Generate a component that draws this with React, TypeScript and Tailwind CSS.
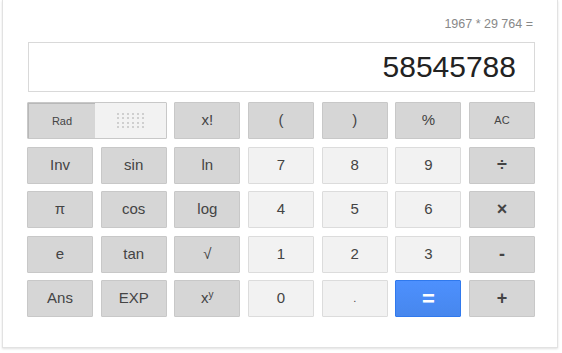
import React from 'react'

type Kind = 'dark' | 'light' | 'blue'

interface Key {
  label: React.ReactNode
  kind: Kind
  small?: boolean
  bold?: boolean
}

const rows: Key[][] = [
  [
    { label: 'x!', kind: 'dark' },
    { label: '(', kind: 'dark' },
    { label: ')', kind: 'dark' },
    { label: '%', kind: 'dark' },
    { label: 'AC', kind: 'dark', small: true },
  ],
  [
    { label: 'Inv', kind: 'dark' },
    { label: 'sin', kind: 'dark' },
    { label: 'ln', kind: 'dark' },
    { label: '7', kind: 'light' },
    { label: '8', kind: 'light' },
    { label: '9', kind: 'light' },
    { label: '÷', kind: 'dark', bold: true },
  ],
  [
    { label: 'π', kind: 'dark' },
    { label: 'cos', kind: 'dark' },
    { label: 'log', kind: 'dark' },
    { label: '4', kind: 'light' },
    { label: '5', kind: 'light' },
    { label: '6', kind: 'light' },
    { label: '×', kind: 'dark', bold: true },
  ],
  [
    { label: 'e', kind: 'dark' },
    { label: 'tan', kind: 'dark' },
    { label: '√', kind: 'dark' },
    { label: '1', kind: 'light' },
    { label: '2', kind: 'light' },
    { label: '3', kind: 'light' },
    { label: '-', kind: 'dark', bold: true },
  ],
  [
    { label: 'Ans', kind: 'dark' },
    { label: 'EXP', kind: 'dark' },
    {
      label: (
        <span>
          x<sup className="text-[10px] -top-[5px]">y</sup>
        </span>
      ),
      kind: 'dark',
    },
    { label: '0', kind: 'light' },
    { label: '.', kind: 'light', small: true },
    { label: '=', kind: 'blue', bold: true },
    { label: '+', kind: 'dark', bold: true },
  ],
]

const kindClass: Record<Kind, string> = {
  dark: 'bg-[#d6d6d6] border-[#c8c8c8] text-[#444]',
  light: 'bg-[#f2f2f2] border-[#dcdcdc] text-[#444]',
  blue: 'bg-gradient-to-b from-[#4d90fe] to-[#4787ed] border-[#3079ed] text-white',
}

function CalcKey({ k }: { k: Key }) {
  const size = k.small ? 'text-[11px]' : k.kind === 'blue' ? 'text-[22px]' : k.bold ? 'text-[18px]' : 'text-[15px]'
  return (
    <div
      className={`h-[37px] flex items-center justify-center border rounded-[1px] ${kindClass[k.kind]} ${size} ${
        k.bold ? 'font-bold' : ''
      }`}
    >
      {k.label}
    </div>
  )
}

function RadDeg() {
  return (
    <div className="col-span-2 h-[37px] flex border border-[#c8c8c8] rounded-[1px]">
      <div className="w-[67px] flex items-center justify-center bg-[#d6d6d6] border-l border-t border-[#b8b8b8] text-[11px] text-[#444]">
        Rad
      </div>
      <div className="flex-1 flex items-center justify-center bg-[#f2f2f2]">
        <div className="grid grid-cols-6 gap-x-[3px] gap-y-[2.5px]">
          {Array.from({ length: 24 }).map((_, i) => (
            <span key={i} className="w-[2px] h-[2px] bg-[#cfcfcf]" />
          ))}
        </div>
      </div>
    </div>
  )
}

export default function App() {
  return (
    <div className="h-[353px] bg-white font-['Liberation_Sans',Arial,sans-serif]">
      <div className="ml-[2px] w-[556px] border-x border-b border-[#e2e2e2] shadow-[0_1px_2px_rgba(0,0,0,0.12)] bg-white pl-[25px] pt-[17px] pb-[30px]">
        <div className="w-[507px] text-right text-[12.5px] leading-[15px] text-[#888] pr-[2px] mb-[10px]">
          1967 * 29 764 =
        </div>
        <div className="w-[507px] h-[50px] border border-[#d9d9d9] flex items-center justify-end pr-[18px]">
          <span className="text-[30px] leading-none text-[#222]">58545788</span>
        </div>
        <div className="mt-[10px] -ml-[1px] w-[508px] grid grid-cols-7 gap-x-[7.67px] gap-y-[7.5px]">
          <RadDeg />
          {rows[0].map((k, i) => (
            <CalcKey key={`r0-${i}`} k={k} />
          ))}
          {rows.slice(1).flatMap((row, r) =>
            row.map((k, i) => <CalcKey key={`r${r + 1}-${i}`} k={k} />)
          )}
        </div>
      </div>
    </div>
  )
}
